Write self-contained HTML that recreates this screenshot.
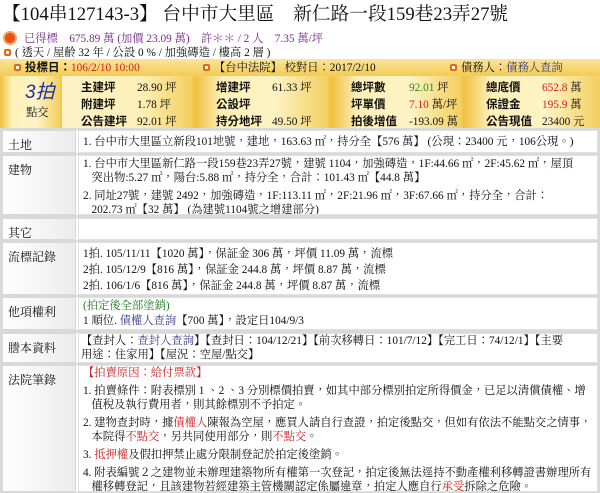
<!DOCTYPE html>
<html><head><meta charset="utf-8"><style>
*{margin:0;padding:0;box-sizing:border-box}
body{width:600px;height:493px;background:#fff;font-family:"Liberation Serif","Noto Serif CJK TC","Noto Serif CJK SC",serif;font-size:11.3px;color:#111;position:relative;overflow:hidden}
.a{position:absolute;white-space:nowrap;line-height:14px}
.t{font-size:18.7px;top:4px;left:2px;line-height:22px}
.l2{top:32px;left:24px;color:#7a2a8a}
.l3{top:46px;left:4px}
.dot{display:inline-block;width:7px;height:7px;border:2px solid #e06a10;border-radius:2px;background:#fff;margin-right:4px;vertical-align:0px}
.band{position:absolute;left:0;top:59px;width:600px;height:70px;background:#f3c94c}
.hd{position:absolute;left:0;top:59px;width:600px;height:17px;background:linear-gradient(#fbe49a,#f3cb55)}
.col{position:absolute;top:76px;height:52px;background:linear-gradient(90deg,#f0c040,#fdf0b8 20%,#fdf3c4 60%,#f3cf60)}
.b{font-weight:bold;font-family:"Liberation Sans","Noto Sans CJK TC",sans-serif;font-size:11.5px}
.r{color:#d02020}.g{color:#2a8a2a}.p{color:#3a3a8a}
.row{position:absolute;left:2px;width:596px;background:#fff}
.lab{position:absolute;left:0;top:0;bottom:0;width:74px;background:linear-gradient(90deg,#fff,#ececec);border:1px solid #d8d8d8;padding:7px 0 0 5px;font-size:12px;line-height:14px}
.c{position:absolute;left:76px;top:0;right:0;bottom:0;border:1px solid #e0e0e0;padding:2px 4px;line-height:14px;white-space:nowrap;overflow:hidden}
.c .blk{display:block;margin-top:4px}
.sep{position:absolute;left:0;width:600px;background:#d9d9d9}
</style></head><body>
<div class="a t">【104串127143-3】 台中市大里區　新仁路一段159巷23弄27號</div>
<div class="a" style="top:31px;left:3px;width:14px;height:14px;border-radius:50%;background:#e8501a;border:2px solid #f7a060"></div>
<div class="a l2">已得標　675.89 萬 (加價 23.09 萬)　許＊＊ / 2 人　7.35 萬/坪</div>
<div class="a l3"><span class="dot"></span>( 透天 / 屋齡 32 年 / 公設 0 % / 加強磚造 / 樓高 2 層 )</div>
<div class="band"></div><div class="hd"></div>
<div class="col" style="left:0;width:60px"></div>
<div class="col" style="left:62px;width:130px;background:linear-gradient(90deg,#fdf3c4,#fdf0b8 60%,#f3cf60)"></div>
<div class="col" style="left:195px;width:133px"></div>
<div class="col" style="left:331px;width:130px"></div>
<div class="col" style="left:463px;width:137px"></div>
<div class="a" style="top:61px;left:14px"><span class="dot"></span><span class="b">投標日：</span><span class="r">106/2/10 10:00</span></div>
<div class="a" style="top:61px;left:203px"><span class="dot"></span>【台中法院】 校對日：2017/2/10</div>
<div class="a" style="top:61px;left:450px"><span class="dot"></span>債務人：<span class="p">債務人查詢</span></div>
<div class="a" style="top:82px;left:25px;font-size:19px;line-height:22px;font-style:italic;color:#2030a0;font-family:'Liberation Sans','Noto Sans CJK TC',sans-serif">3拍</div>
<div class="a" style="top:106px;left:26px">點交</div>
<div class="a" style="top:80px;left:81px;line-height:17px"><span class="b">主建坪</span><br><span class="b">附建坪</span><br><span class="b">公告建坪</span></div>
<div class="a" style="top:80px;left:137px;line-height:17px">28.90 坪<br>1.78 坪<br>92.01 坪</div>
<div class="a" style="top:80px;left:216px;line-height:17px"><span class="b">增建坪</span><br><span class="b">公設坪</span><br><span class="b">持分地坪</span></div>
<div class="a" style="top:80px;left:272px;line-height:17px">61.33 坪<br><br>49.50 坪</div>
<div class="a" style="top:80px;left:351px;line-height:17px"><span class="b">總坪數</span><br><span class="b">坪單價</span><br><span class="b">拍後增值</span></div>
<div class="a" style="top:80px;left:409px;line-height:17px"><span class="g">92.01</span> 坪<br><span class="r">7.10</span> 萬/坪<br>-193.09 萬</div>
<div class="a" style="top:80px;left:486px;line-height:17px"><span class="b">總底價</span><br><span class="b">保證金</span><br><span class="b">公告現值</span></div>
<div class="a" style="top:80px;left:542px;line-height:17px"><span class="r">652.8</span> 萬<br><span class="r">195.9</span> 萬<br>23400 元</div>
<div class="sep" style="top:128px;height:365px"></div>
<div class="row" style="top:130px;height:23px"><div class="lab">土地</div><div class="c" style="padding-top:4px">1. 台中市大里區立新段101地號，建地，163.63 ㎡，持分全【576 萬】 (公現：23400 元，106公現。)</div></div>
<div class="row" style="top:155px;height:60px"><div class="lab">建物</div><div class="c" style="padding-top:1px">1. 台中市大里區新仁路一段159巷23弄27號，建號 1104，加強磚造，1F:44.66 ㎡，2F:45.62 ㎡，屋頂<br>&nbsp;&nbsp;&nbsp;突出物:5.27 ㎡，陽台:5.88 ㎡，持分全，合計：101.43 ㎡【44.8 萬】<span class="blk">2. 同址27號，建號 2492，加強磚造，1F:113.11 ㎡，2F:21.96 ㎡，3F:67.66 ㎡，持分全，合計：<br>&nbsp;&nbsp;&nbsp;202.73 ㎡【32 萬】 (為建號1104號之增建部分)</span></div></div>
<div class="row" style="top:218px;height:22px"><div class="lab">其它</div><div class="c"></div></div>
<div class="row" style="top:242px;height:53px"><div class="lab">流標記錄</div><div class="c" style="line-height:16px;padding-top:3px">1拍. 105/11/11【1020 萬】，保証金 306 萬，坪價 11.09 萬，流標<br>2拍. 105/12/9【816 萬】，保証金 244.8 萬，坪價 8.87 萬，流標<br>2拍. 106/1/6【816 萬】，保証金 244.8 萬，坪價 8.87 萬，流標</div></div>
<div class="row" style="top:297px;height:33px"><div class="lab">他項權利</div><div class="c" style="line-height:15px;padding-top:1px"><span style="color:#1a7a1a">(拍定後全部塗銷)</span><br>1 順位. <span class="p">債權人查詢</span>【700 萬】，設定日104/9/3</div></div>
<div class="row" style="top:333px;height:30px"><div class="lab">謄本資料</div><div class="c" style="line-height:14px;padding:0 0 0 2px">【查封人：<span class="p">查封人查詢</span>】【查封日：104/12/21】【前次移轉日：101/7/12】【完工日：74/12/1】【主要<br>用途：住家用】【屋況：空屋/點交】</div></div>
<div class="row" style="top:365px;height:127px"><div class="lab">法院筆錄</div><div class="c" style="line-height:14px;padding-top:0"><span class="r">【拍賣原因：給付票款】</span><span class="blk">1. 拍賣條件：附表標別 1 、2 、3 分別標價拍賣，如其中部分標別拍定所得價金，已足以清償債權、增<br>&nbsp;&nbsp;&nbsp;值稅及執行費用者，則其餘標別不予拍定。</span><span class="blk">2. 建物查封時，據<span class="r">債權人</span>陳報為空屋，應買人請自行查證，拍定後點交，但如有依法不能點交之情事，<br>&nbsp;&nbsp;&nbsp;本院得<span class="r">不點交</span>，另共同使用部分，則<span class="r">不點交</span>。</span><span class="blk">3. <span class="r">抵押權</span>及假扣押禁止處分限制登記於拍定後塗銷。</span><span class="blk">4. 附表編號２之建物並未辦理建築物所有權第一次登記，拍定後無法逕持不動產權利移轉證書辦理所有<br>&nbsp;&nbsp;&nbsp;權移轉登記，且該建物若經建築主管機關認定係屬違章，拍定人應自行<span class="r">承受</span>拆除之危險。</span></div></div>
</body></html>
